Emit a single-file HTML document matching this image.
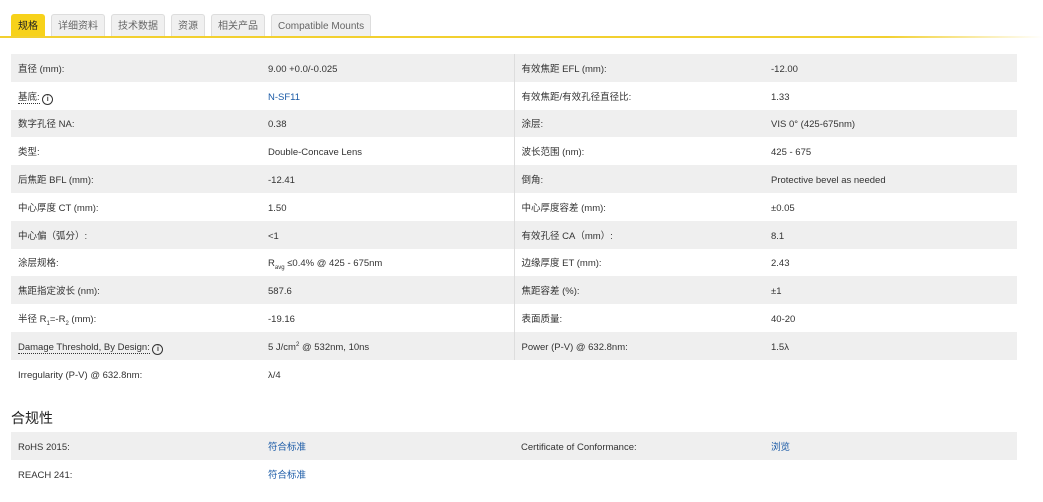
<!DOCTYPE html>
<html><head><meta charset="utf-8"><style>
body{margin:0;background:#fff;font-family:"Liberation Sans","Noto Sans CJK SC",sans-serif;font-size:9.5px;color:#333;width:1043px;height:502px;overflow:hidden;position:relative}
.tabs{position:absolute;left:11px;top:14px;height:23px;display:flex;gap:6px}
.tab{background:#f0f0f0;border:1px solid #ddd;border-bottom:none;border-radius:3px 3px 0 0;padding:0 6px;line-height:23px;color:#666;font-size:10px}
.tab.on{background:#f7d21a;border-color:#f7d21a;color:#222}
.line{position:absolute;left:0;top:36px;width:1043px;height:2px;background:linear-gradient(to right,#f2d030 85%,#fff)}
table{position:absolute;left:11px;border-collapse:collapse;width:1005px;table-layout:fixed}
td{height:27.8px;padding:4px 0 0 7px;vertical-align:middle;line-height:12px;box-sizing:border-box}
td>div{height:12px;line-height:12px;white-space:nowrap}
tr:nth-child(odd) td{background:#efefef}
td.c3{border-left:1px solid #ddd}
col.a{width:250px}col.b{width:253px}
.dot{border-bottom:1px dotted #333}
.i{display:inline-block;width:9px;height:9px;border:1.3px solid #333;border-radius:50%;font-size:7px;line-height:9px;text-align:center;font-weight:bold;vertical-align:-1px}
a{color:#1a5aa6;text-decoration:none}
h3{position:absolute;left:11px;top:408px;margin:0;font-size:14px;font-weight:normal;color:#222}
sub,sup{font-size:6px;line-height:0}
</style></head><body>
<div class="tabs"><div class="tab on">规格</div><div class="tab">详细资料</div><div class="tab">技术数据</div><div class="tab">资源</div><div class="tab">相关产品</div><div class="tab">Compatible Mounts</div></div>
<div class="line"></div>
<table style="top:54px"><col class="a"><col class="b"><col class="a"><col class="b">
<tr><td><div>直径 (mm):</div></td><td><div>9.00 +0.0/-0.025</div></td><td class="c3"><div>有效焦距 EFL (mm):</div></td><td><div>-12.00</div></td></tr>
<tr><td><div><span class="dot">基底:</span> <span class="i">i</span></div></td><td><div><a>N-SF11</a></div></td><td class="c3"><div>有效焦距/有效孔径直径比:</div></td><td><div>1.33</div></td></tr>
<tr><td><div>数字孔径 NA:</div></td><td><div>0.38</div></td><td class="c3"><div>涂层:</div></td><td><div>VIS 0° (425-675nm)</div></td></tr>
<tr><td><div>类型:</div></td><td><div>Double-Concave Lens</div></td><td class="c3"><div>波长范围 (nm):</div></td><td><div>425 - 675</div></td></tr>
<tr><td><div>后焦距 BFL (mm):</div></td><td><div>-12.41</div></td><td class="c3"><div>倒角:</div></td><td><div>Protective bevel as needed</div></td></tr>
<tr><td><div>中心厚度 CT (mm):</div></td><td><div>1.50</div></td><td class="c3"><div>中心厚度容差 (mm):</div></td><td><div>±0.05</div></td></tr>
<tr><td><div>中心偏（弧分）:</div></td><td><div>&lt;1</div></td><td class="c3"><div>有效孔径 CA（mm）:</div></td><td><div>8.1</div></td></tr>
<tr><td><div>涂层规格:</div></td><td><div>R<sub>avg</sub> ≤0.4% @ 425 - 675nm</div></td><td class="c3"><div>边缘厚度 ET (mm):</div></td><td><div>2.43</div></td></tr>
<tr><td><div>焦距指定波长 (nm):</div></td><td><div>587.6</div></td><td class="c3"><div>焦距容差 (%):</div></td><td><div>±1</div></td></tr>
<tr><td><div>半径 R<sub>1</sub>=-R<sub>2</sub> (mm):</div></td><td><div>-19.16</div></td><td class="c3"><div>表面质量:</div></td><td><div>40-20</div></td></tr>
<tr><td><div><span class="dot">Damage Threshold, By Design:</span> <span class="i">i</span></div></td><td><div>5 J/cm<sup>2</sup> @ 532nm, 10ns</div></td><td class="c3"><div>Power (P-V) @ 632.8nm:</div></td><td><div>1.5λ</div></td></tr>
<tr><td style="background:#fff"><div>Irregularity (P-V) @ 632.8nm:</div></td><td style="background:#fff"><div>λ/4</div></td><td style="background:#fff"></td><td style="background:#fff"></td></tr>
</table>
<h3>合规性</h3>
<table style="top:432px"><col class="a"><col class="b"><col class="a"><col class="b">
<tr><td><div>RoHS 2015:</div></td><td><div><a>符合标准</a></div></td><td><div>Certificate of Conformance:</div></td><td><div><a>浏览</a></div></td></tr>
<tr><td><div>REACH 241:</div></td><td><div><a>符合标准</a></div></td><td></td><td></td></tr>
</table>
</body></html>
